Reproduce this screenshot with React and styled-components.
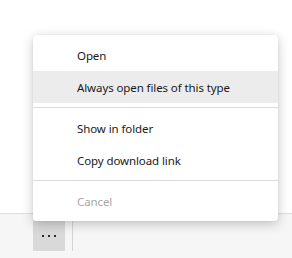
import React from 'react';
import styled, { createGlobalStyle } from 'styled-components';

const GlobalStyle = createGlobalStyle`
    html, body {
        margin: 0;
        padding: 0;
        background: #ffffff;
    }
    body {
        font-family: 'Noto Sans', 'Open Sans', sans-serif;
    }
`;

export default function App() {
    return (
        <Page>
            <GlobalStyle />
            <Top>
                <Menu>
                    <Item>Open</Item>
                    <Item active>Always open files of this type</Item>
                    <Separator />
                    <Item>Show in folder</Item>
                    <Item>Copy download link</Item>
                    <Separator />
                    <Item disabled>Cancel</Item>
                </Menu>
            </Top>
            <Shelf>
                <MoreButton>
                    <Dot /><Dot /><Dot />
                </MoreButton>
                <Divider />
            </Shelf>
        </Page>
    );
}

const Page = styled.div`
    width: 292px;
    height: 258px;
    display: flex;
    flex-direction: column;
    overflow: hidden;
`;

const Top = styled.div`
    height: 213px;
    position: relative;
`;

const Menu = styled.div`
    position: absolute;
    top: 35px;
    left: 33px;
    width: 245px;
    padding: 4px 0;
    background: #ffffff;
    border-radius: 4px;
    box-shadow: 0 3px 12px rgba(0, 0, 0, .22), 0 0 2px rgba(0, 0, 0, .08);
    z-index: 2;
`;

const Item = styled.div`
    height: 32px;
    display: flex;
    align-items: center;
    padding-left: 44px;
    font-size: 11.5px;
    letter-spacing: -0.1px;
    color: ${p => (p.disabled ? '#a6a6a6' : '#1a1a1a')};
    background: ${p => (p.active ? '#ececec' : 'transparent')};
`;

const Separator = styled.div`
    height: 1px;
    margin: 4px 0;
    background: #dcdcdc;
`;

const Shelf = styled.div`
    flex: 1;
    border-top: 1px solid #dedede;
    background: #f6f6f6;
    display: flex;
    align-items: flex-start;
    padding: 7px 0 0 33px;
    gap: 7px;
`;

const MoreButton = styled.div`
    width: 32px;
    height: 30px;
    background: #d9d9d9;
    display: flex;
    align-items: center;
    justify-content: center;
    gap: 4px;
`;

const Dot = styled.span`
    width: 2px;
    height: 2px;
    background: #2b2b2b;
`;

const Divider = styled.div`
    width: 1px;
    height: 30px;
    background: #d4d4d4;
`;
